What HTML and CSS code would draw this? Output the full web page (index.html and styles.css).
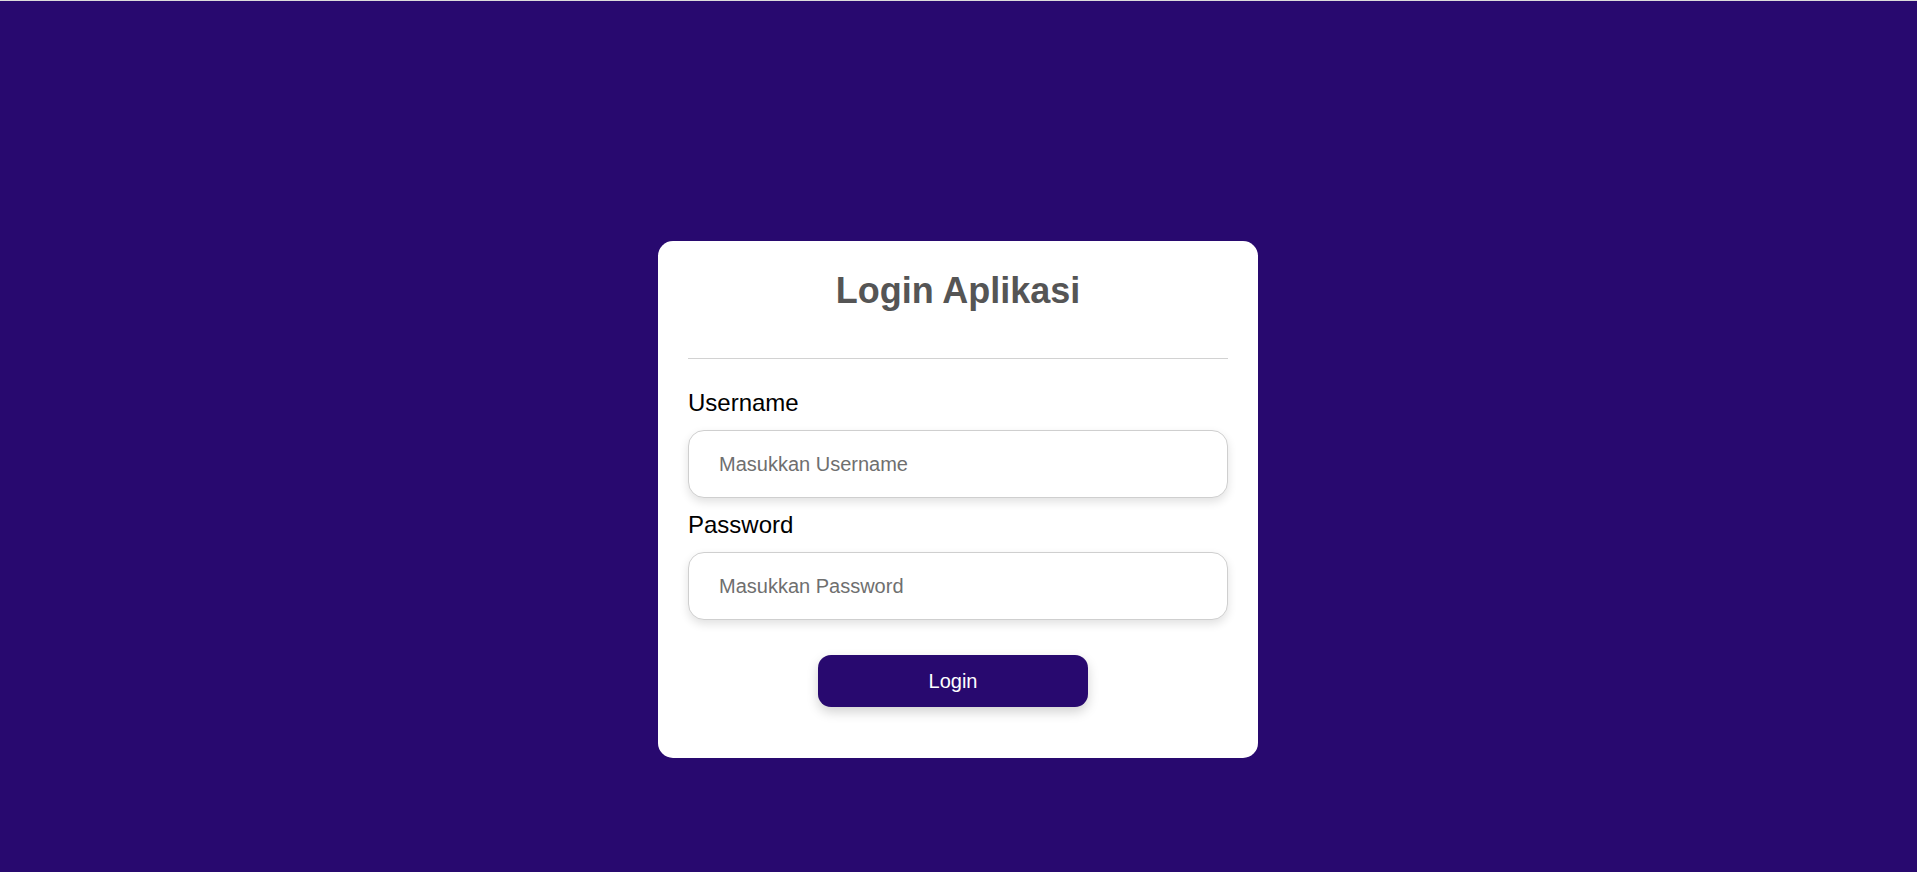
FILE: index.html
```html
<!DOCTYPE html>
<html lang="id">
<head>
<meta charset="utf-8">
<title>Login Aplikasi</title>
<link rel="stylesheet" href="styles.css">
</head>
<body>
<main class="page">
  <div class="card">
    <h2 class="title">Login Aplikasi</h2>
    <hr class="divider">
    <form class="form">
      <label class="label" for="username">Username</label>
      <input class="input" id="username" type="text" placeholder="Masukkan Username">
      <label class="label label-second" for="password">Password</label>
      <input class="input" id="password" type="password" placeholder="Masukkan Password">
      <button class="btn" type="button">Login</button>
    </form>
  </div>
</main>
</body>
</html>
```

FILE: styles.css
```css
html, body {
  margin: 0;
  padding: 0;
}
body {
  background: #28096f;
  border-top: 1px solid #dcdcdc;
  min-height: 871px;
  font-family: "Liberation Sans", Arial, sans-serif;
}
.page {
  display: flex;
  justify-content: center;
  padding-top: 240px;
  padding-right: 1px;
}
.card {
  width: 600px;
  box-sizing: border-box;
  background: #ffffff;
  border-radius: 15px;
  padding: 29px 30px 51px;
}
.title {
  margin: 0;
  font-size: 36px;
  line-height: 41px;
  font-weight: bold;
  color: #555555;
  text-align: center;
}
.divider {
  margin: 47px 0 0;
  border: 0;
  border-top: 1px solid #d2d2d2;
  height: 0;
}
.form {
  display: flex;
  flex-direction: column;
  padding-top: 30px;
}
.label {
  font-size: 24px;
  line-height: 28px;
  color: #000000;
  margin-bottom: 13px;
}
.label-second {
  margin-top: 13px;
  margin-bottom: 13px;
}
.input {
  height: 68px;
  box-sizing: border-box;
  border: 1px solid #cfcfcf;
  border-radius: 16px;
  padding: 0 30px;
  font-family: "Liberation Sans", Arial, sans-serif;
  font-size: 20px;
  color: #333;
  background: #fff;
  box-shadow: 0 4px 10px rgba(0, 0, 0, 0.12);
  outline: none;
}
.input::placeholder {
  color: #6f6f6f;
}
.btn {
  margin-top: 35px;
  margin-left: 130px;
  width: 270px;
  height: 52px;
  border: 0;
  border-radius: 13px;
  background: #28096f;
  color: #ffffff;
  font-family: "Liberation Sans", Arial, sans-serif;
  font-size: 20px;
  box-shadow: 0 5px 12px rgba(0, 0, 0, 0.18);
  cursor: pointer;
}
```
